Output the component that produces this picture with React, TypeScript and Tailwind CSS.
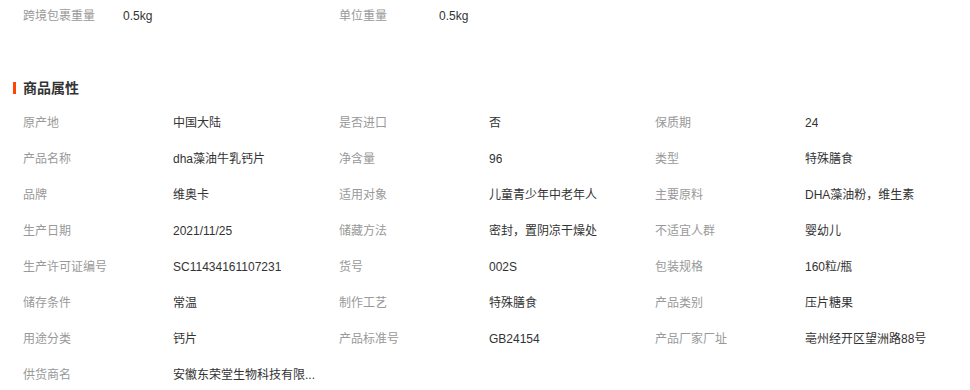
const topRow = [
  { label: "跨境包裹重量", value: "0.5kg" },
  { label: "单位重量", value: "0.5kg" }
];

const attrs = [
  { label: "原产地", value: "中国大陆" },
  { label: "是否进口", value: "否" },
  { label: "保质期", value: "24" },
  { label: "产品名称", value: "dha藻油牛乳钙片" },
  { label: "净含量", value: "96" },
  { label: "类型", value: "特殊膳食" },
  { label: "品牌", value: "维奥卡" },
  { label: "适用对象", value: "儿童青少年中老年人" },
  { label: "主要原料", value: "DHA藻油粉，维生素" },
  { label: "生产日期", value: "2021/11/25" },
  { label: "储藏方法", value: "密封，置阴凉干燥处" },
  { label: "不适宜人群", value: "婴幼儿" },
  { label: "生产许可证编号", value: "SC11434161107231" },
  { label: "货号", value: "002S" },
  { label: "包装规格", value: "160粒/瓶" },
  { label: "储存条件", value: "常温" },
  { label: "制作工艺", value: "特殊膳食" },
  { label: "产品类别", value: "压片糖果" },
  { label: "用途分类", value: "钙片" },
  { label: "产品标准号", value: "GB24154" },
  { label: "产品厂家厂址", value: "亳州经开区望洲路88号" },
  { label: "供货商名", value: "安徽东荣堂生物科技有限..." }
];

const font = { fontFamily: '"Liberation Sans", "Noto Sans CJK SC", sans-serif' };

export default function App() {
  return (
    <div className="h-[390px] w-[970px] overflow-hidden bg-white text-[12px]" style={font}>
      <div className="flex h-[32px] items-center pl-[23px]">
        {topRow.map((item) => (
          <div key={item.label} className="flex w-[316px] items-center">
            <span className="w-[100px] text-[#999]">{item.label}</span>
            <span className="text-[#333]">{item.value}</span>
          </div>
        ))}
      </div>

      <div className="mt-[46px] flex h-[20px] items-center pl-[13px]">
        <span className="h-[12px] w-[3px] bg-[#ff4400]" />
        <h3 className="ml-[7px] text-[14px] font-bold text-[#333]">商品属性</h3>
      </div>

      <div className="mt-[7px] grid grid-cols-[316px_316px_316px] pl-[23px]">
        {attrs.map((item) => (
          <div key={item.label} className="flex h-[36px] items-center">
            <span className="w-[150px] shrink-0 text-[#999]">{item.label}</span>
            <span className="truncate text-[#333]">{item.value}</span>
          </div>
        ))}
      </div>
    </div>
  );
}
